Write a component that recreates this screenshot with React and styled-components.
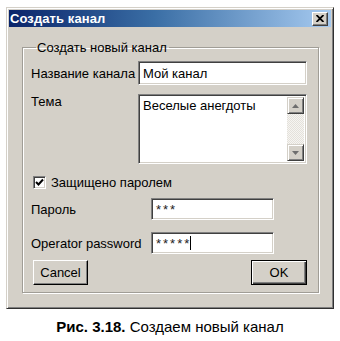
import React from "react";
import styled, { createGlobalStyle } from "styled-components";

const Global = createGlobalStyle`
  html, body { margin: 0; padding: 0; background: #ffffff; }
  body { font-family: "Liberation Sans", Arial, sans-serif; }
  * { box-sizing: border-box; }
`;

const face = "#d4d0c8";

const Page = styled.div`
  width: 340px;
  height: 341px;
  padding: 7px 0 0 6px;
  display: flex;
  flex-direction: column;
`;

const Window = styled.div`
  width: 328px;
  height: 302px;
  background: ${face};
  border-top: 1px solid ${face};
  border-left: 1px solid ${face};
  border-right: 1px solid #303030;
  border-bottom: 1px solid #303030;
  box-shadow: inset 1px 1px 0 #ffffff, inset -1px -1px 0 #808080;
  padding: 2px;
  display: flex;
  flex-direction: column;
`;

const TitleBar = styled.div`
  height: 20px;
  background: linear-gradient(to right, #0a246a 0%, #3a6ea5 45%, #a6caf0 100%);
  display: flex;
  align-items: center;
  justify-content: space-between;
  padding: 0 3px 0 1px;
`;

const TitleText = styled.span`
  color: #ffffff;
  font-weight: bold;
  font-size: 13px;
  letter-spacing: 0.1px;
`;

const CloseButton = styled.div`
  width: 16px;
  height: 14px;
  background: ${face};
  border-top: 1px solid #ffffff;
  border-left: 1px solid #ffffff;
  border-right: 1px solid #404040;
  border-bottom: 1px solid #404040;
  box-shadow: inset -1px -1px 0 #808080;
  display: flex;
  align-items: center;
  justify-content: center;
`;

const Body = styled.div`
  flex: 1;
  padding: 13px 12px 13px 13px;
  display: flex;
`;

const Group = styled.fieldset`
  flex: 1;
  margin: 0;
  padding: 6px 11px 7px 8px;
  border: 1px solid #a09d96;
  box-shadow: 1px 1px 0 #ffffff, inset 1px 1px 0 #ffffff;
  min-inline-size: 0;
  display: flex;
  flex-direction: column;
`;

const Legend = styled.legend`
  padding: 0 2px 0 1px;
  margin-left: 5px;
  font-size: 13px;
  line-height: 15px;
  color: #000;
`;

const Row = styled.div`
  display: flex;
  align-items: ${(p) => (p.$top ? "flex-start" : "center")};
  margin-top: ${(p) => p.$mt || 0}px;
`;

const Label = styled.span`
  width: ${(p) => p.$w}px;
  flex: none;
  font-size: 13px;
  line-height: 15px;
  color: #000;
`;

const Sunken = styled.div`
  background: #ffffff;
  border-top: 1px solid #808080;
  border-left: 1px solid #808080;
  border-bottom: 1px solid #ffffff;
  border-right: 1px solid #ffffff;
  box-shadow: inset 1px 1px 0 #404040, inset -1px -1px 0 ${face};
`;

const Input = styled(Sunken)`
  width: ${(p) => p.$w}px;
  height: ${(p) => p.$h}px;
  padding: 0 4px;
  display: flex;
  align-items: center;
  font-size: 13px;
  letter-spacing: ${(p) => (p.$pw ? 2 : 0)}px;
  color: ${(p) => (p.$pw ? "#222" : "#000")};
`;

const Caret = styled.span`
  display: inline-block;
  width: 1px;
  height: 14px;
  background: #000;
  margin-left: -1px;
`;

const Memo = styled(Sunken)`
  width: 169px;
  height: 70px;
  display: flex;
  padding: 2px;
`;

const MemoText = styled.div`
  flex: 1;
  padding: 1px 2px;
  font-size: 13px;
  line-height: 15px;
  color: #000;
`;

const ScrollBar = styled.div`
  width: 17px;
  display: flex;
  flex-direction: column;
  justify-content: space-between;
  background-color: #eceae6;
  background-image: repeating-conic-gradient(#f6f5f2 0 25%, #e4e1db 0 50%);
  background-size: 2px 2px;
`;

const ScrollButton = styled.div`
  width: 17px;
  height: 17px;
  background: ${face};
  border-top: 1px solid ${face};
  border-left: 1px solid ${face};
  border-right: 1px solid #404040;
  border-bottom: 1px solid #404040;
  box-shadow: inset 1px 1px 0 #ffffff, inset -1px -1px 0 #808080;
  display: flex;
  align-items: center;
  justify-content: center;
`;

const Check = styled.div`
  width: 13px;
  height: 13px;
  margin-left: 2px;
  margin-right: 5px;
  background: #fff;
  border-top: 1px solid #808080;
  border-left: 1px solid #808080;
  border-bottom: 1px solid #ffffff;
  border-right: 1px solid #ffffff;
  box-shadow: inset 1px 1px 0 #404040, inset -1px -1px 0 ${face};
  display: flex;
  align-items: center;
  justify-content: center;
`;

const ButtonRow = styled.div`
  display: flex;
  justify-content: space-between;
  margin-top: 6px;
  padding-left: 2px;
`;

const Button = styled.div`
  width: ${(p) => (p.$default ? 56 : 55)}px;
  height: 25px;
  background: ${face};
  display: flex;
  align-items: center;
  justify-content: center;
  font-size: 13px;
  color: #000;
  border-top: 1px solid ${(p) => (p.$default ? "#000" : "#ffffff")};
  border-left: 1px solid ${(p) => (p.$default ? "#000" : "#ffffff")};
  border-right: 1px solid #000;
  border-bottom: 1px solid #000;
  box-shadow: ${(p) =>
    p.$default
      ? "inset 1px 1px 0 #ffffff, inset -1px -1px 0 #404040, inset -2px -2px 0 #808080"
      : "inset -1px -1px 0 #808080"};
`;

const Caption = styled.div`
  width: 328px;
  margin-top: 9px;
  text-align: center;
  font-size: 15px;
  line-height: 17px;
  color: #000;
`;

const Arrow = ({ down }) => (
  <svg width="7" height="4" viewBox="0 0 7 4">
    <path d={down ? "M0 0 H7 L3.5 4 Z" : "M0 4 H7 L3.5 0 Z"} fill="#6e6e6e" />
  </svg>
);

export default function App() {
  return (
    <>
      <Global />
      <Page>
        <Window>
          <TitleBar>
            <TitleText>Создать канал</TitleText>
            <CloseButton>
              <svg width="8" height="7" viewBox="0 0 8 7">
                <path d="M0.5 0 L7.5 7 M7.5 0 L0.5 7" stroke="#000" strokeWidth="1.8" />
              </svg>
            </CloseButton>
          </TitleBar>
          <Body>
            <Group>
              <Legend>Создать новый канал</Legend>
              <Row>
                <Label $w={107}>Название канала</Label>
                <Input $w={169} $h={24}>Мой канал</Input>
              </Row>
              <Row $top $mt={9}>
                <Label $w={107}>Тема</Label>
                <Memo>
                  <MemoText>Веселые анегдоты</MemoText>
                  <ScrollBar>
                    <ScrollButton>
                      <Arrow />
                    </ScrollButton>
                    <ScrollButton>
                      <Arrow down />
                    </ScrollButton>
                  </ScrollBar>
                </Memo>
              </Row>
              <Row $mt={11}>
                <Check>
                  <svg width="9" height="9" viewBox="0 0 9 9">
                    <path d="M1 4 L3.5 6.5 L8 1.5" fill="none" stroke="#000" strokeWidth="2" />
                  </svg>
                </Check>
                <Label $w={160}>Защищено паролем</Label>
              </Row>
              <Row $mt={8}>
                <Label $w={120}>Пароль</Label>
                <Input $w={123} $h={22} $pw>***</Input>
              </Row>
              <Row $mt={12}>
                <Label $w={120}>Operator password</Label>
                <Input $w={123} $h={22} $pw>
                  *****<Caret />
                </Input>
              </Row>
              <ButtonRow>
                <Button>Cancel</Button>
                <Button $default>OK</Button>
              </ButtonRow>
            </Group>
          </Body>
        </Window>
        <Caption>
          <b>Рис. 3.18.</b> Создаем новый канал
        </Caption>
      </Page>
    </>
  );
}
